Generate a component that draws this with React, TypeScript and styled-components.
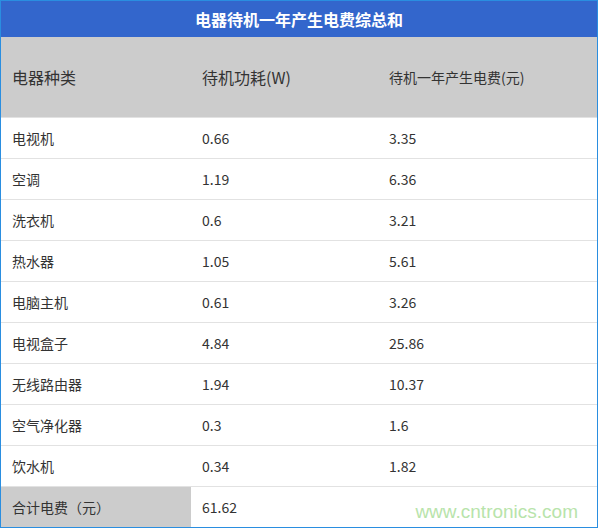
import styled, { createGlobalStyle } from "styled-components";

const GlobalStyle = createGlobalStyle`
  html, body {
    margin: 0;
    padding: 0;
    background: #ffffff;
  }
  body {
    font-family: "Noto Sans CJK SC", "Noto Sans", sans-serif;
  }
`;

type Row = {
  name: string;
  power: string;
  cost: string;
};

const rows: Row[] = [
  { name: "电视机", power: "0.66", cost: "3.35" },
  { name: "空调", power: "1.19", cost: "6.36" },
  { name: "洗衣机", power: "0.6", cost: "3.21" },
  { name: "热水器", power: "1.05", cost: "5.61" },
  { name: "电脑主机", power: "0.61", cost: "3.26" },
  { name: "电视盒子", power: "4.84", cost: "25.86" },
  { name: "无线路由器", power: "1.94", cost: "10.37" },
  { name: "空气净化器", power: "0.3", cost: "1.6" },
  { name: "饮水机", power: "0.34", cost: "1.82" },
];

const Frame = styled.div`
  position: relative;
  width: 598px;
  box-sizing: border-box;
  border: 1px solid #2a8ee0;
  background: #ffffff;
`;

const Title = styled.div`
  height: 36px;
  background: #3366cc;
  color: #ffffff;
  font-weight: 700;
  font-size: 16px;
  line-height: 20px;
  display: flex;
  align-items: center;
  justify-content: center;
`;

const Line = styled.div<{ $head?: boolean; $last?: boolean }>`
  display: grid;
  grid-template-columns: 190px 187px 1fr;
  height: ${(p) => (p.$head ? "80px" : "40px")};
  border-bottom: ${(p) => (p.$last ? "none" : "1px solid #e2e2e2")};
  background: ${(p) => (p.$head ? "#cccccc" : "transparent")};
  color: #333333;
  font-size: 14px;
  line-height: 20px;
`;

const Cell = styled.div<{ $shaded?: boolean; $big?: boolean }>`
  display: flex;
  align-items: center;
  padding-left: 11px;
  padding-bottom: 1px;
  font-size: ${(p) => (p.$big ? "16px" : "14px")};
  background: ${(p) => (p.$shaded ? "#cccccc" : "transparent")};
  white-space: nowrap;
`;

const Watermark = styled.div`
  position: absolute;
  right: 19px;
  bottom: 6px;
  font-family: "Liberation Sans", Arial, sans-serif;
  font-size: 19px;
  line-height: 19px;
  color: #b8e4ab;
`;

export default function App() {
  return (
    <>
      <GlobalStyle />
      <Frame>
        <Title>电器待机一年产生电费综总和</Title>
        <Line $head>
          <Cell $big>电器种类</Cell>
          <Cell $big>待机功耗(W)</Cell>
          <Cell>待机一年产生电费(元)</Cell>
        </Line>
        {rows.map((r) => (
          <Line key={r.name}>
            <Cell>{r.name}</Cell>
            <Cell>{r.power}</Cell>
            <Cell>{r.cost}</Cell>
          </Line>
        ))}
        <Line $last>
          <Cell $shaded>合计电费（元）</Cell>
          <Cell>61.62</Cell>
          <Cell />
        </Line>
        <Watermark>www.cntronics.com</Watermark>
      </Frame>
    </>
  );
}
